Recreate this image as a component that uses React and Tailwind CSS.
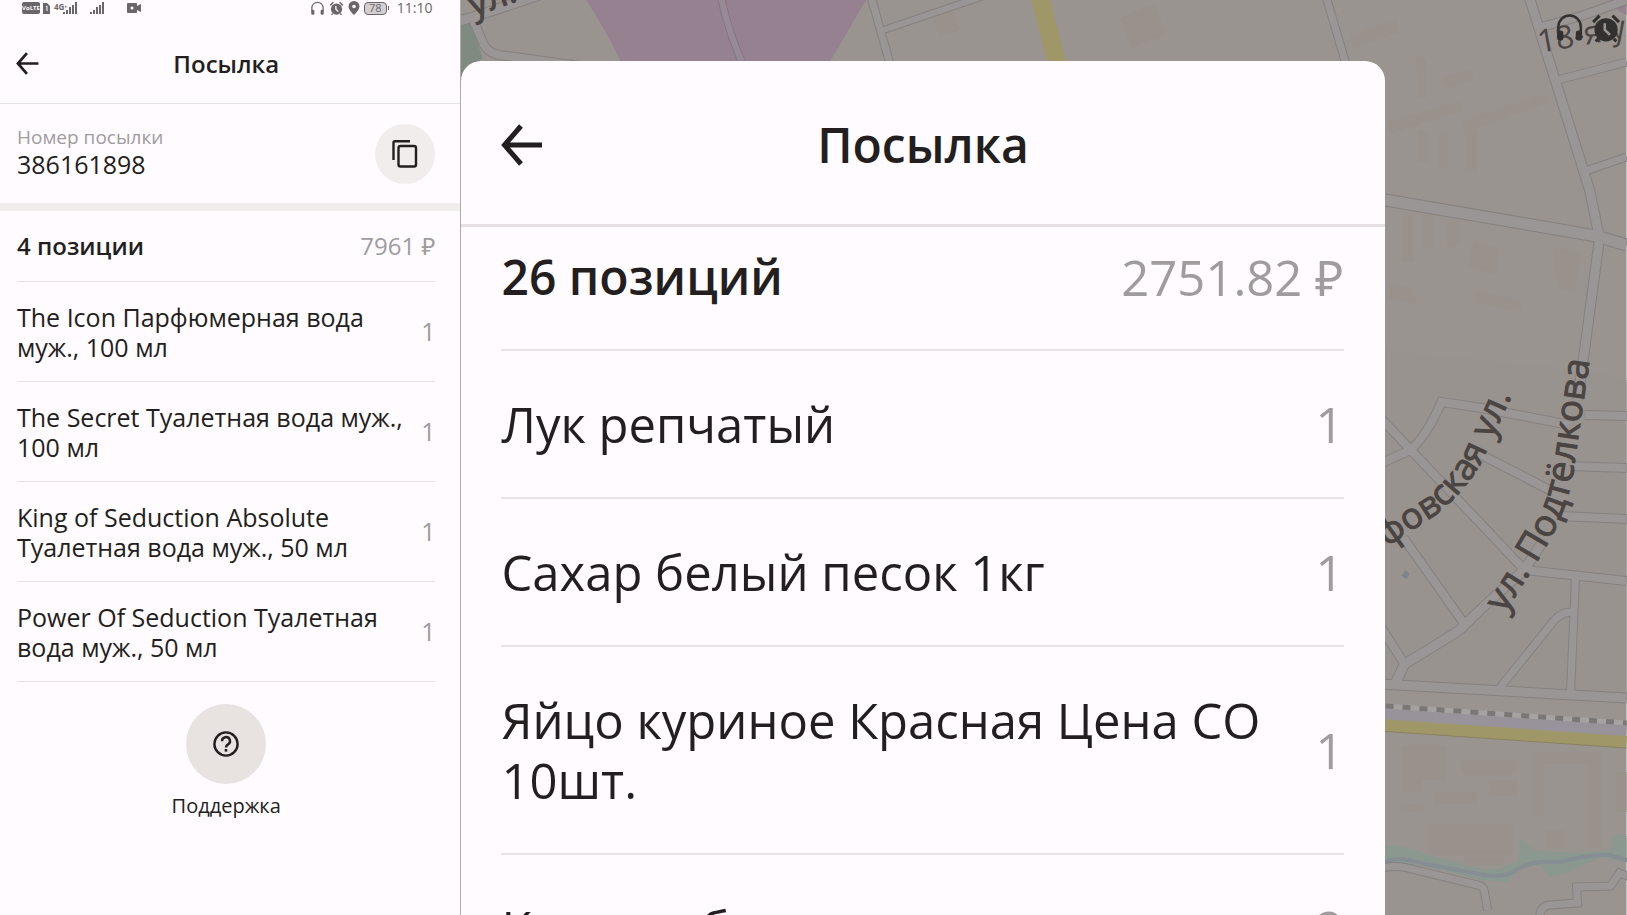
const perfumes = [
  { title: 'The Icon Парфюмерная вода муж., 100 мл', count: 1 },
  { title: 'The Secret Туалетная вода муж., 100 мл', count: 1 },
  { title: 'King of Seduction Absolute Туалетная вода муж., 50 мл', count: 1 },
  { title: 'Power Of Seduction Туалетная вода муж., 50 мл', count: 1 },
];

const groceries = [
  { title: 'Лук репчатый', count: 1 },
  { title: 'Сахар белый песок 1кг', count: 1 },
  { title: 'Яйцо куриное Красная Цена СО 10шт.', count: 1 },
  { title: 'Капуста белокочанная', count: 2 },
];

const roads = [
  { d: 'M455 22 L474 17 L540 -5', w: 9 },
  { d: 'M472 16 L484 44 Q488 53 500 55 L580 66', w: 8 },
  { d: 'M871 -5 L891 66', w: 7 },
  { d: 'M884 30 L990 -6', w: 6 },
  { d: 'M1326 -5 L1347 66', w: 7 },
  { d: 'M1529 -5 L1555 78 L1590 190 L1600 238 L1585 350 L1578 400', w: 9 },
  { d: 'M1542 27 L1585 15 L1627 0', w: 8 },
  { d: 'M1558 80 L1627 62', w: 7 },
  { d: 'M1586 171 L1627 157', w: 7 },
  { d: 'M1380 199 L1597 236 L1627 245', w: 11 },
  { d: 'M1380 464 L1411 450 Q1427 436 1442 402 L1482 408 L1570 425', w: 8 },
  { d: 'M1585 415 L1627 416', w: 8 },
  { d: 'M1380 417 L1525 570', w: 8 },
  { d: 'M1482 455 L1550 490', w: 8 },
  { d: 'M1570 466 L1627 468', w: 8 },
  { d: 'M1560 516 L1627 519', w: 8 },
  { d: 'M1404 538 L1467 627', w: 8 },
  { d: 'M1544 540 L1525 570 Q1490 600 1460 630 Q1440 643 1405 664 L1396 683', w: 9 },
  { d: 'M1525 570 L1627 581', w: 8 },
  { d: 'M1576 576 L1571 692', w: 7 },
  { d: 'M1574 612 Q1563 611 1555 620 L1500 688', w: 7 },
  { d: 'M1380 625 L1405 664', w: 8 },
  { d: 'M1380 684 L1627 698', w: 9 },
  { d: 'M1380 869 Q1395 863 1420 871 L1478 885 Q1484 886 1485 892 L1488 910', w: 7 },
  { d: 'M1540 920 Q1540 906 1550 905 L1578 903 L1577 887 L1611 886 L1620 873 L1630 877', w: 7 },
];

const buildings = [
  'M1120 18 l34 -14 l12 30 l-34 14 z',
  'M930 12 l20 -6 l10 24 l-20 6 z',
  'M1350 35 l46 -14 l4 12 l-46 14 z',
  'M1416 58 h11 v40 h-8 z',
  'M1442 78 l28 -8 l4 10 l-28 8 z',
  'M1388 122 l72 -20 l3 9 l-72 22 z',
  'M1462 122 l84 -28 l3 9 l-84 29 z',
  'M1418 130 h10 v32 h-10 z',
  'M1440 132 h8 v36 h-8 z',
  'M1466 130 h12 v42 h-12 z',
  'M1402 216 h12 v46 h-12 z',
  'M1424 214 h10 v34 h-10 z',
  'M1448 220 h12 v26 h-12 z',
  'M1474 240 l26 8 l-4 26 l-28 -8 z',
  'M1553 248 l28 6 l-6 38 l-16 -4 z',
  'M1390 284 l26 5 v14 l-26 -4 z',
  'M1476 290 l46 12 v10 l-46 -10 z',
  'M1402 746 h44 v34 h-24 v12 h-20 z',
  'M1462 760 h54 v14 h-54 z',
  'M1490 780 h28 v16 h-28 z',
  'M1434 792 h44 v12 h-44 z',
  'M1402 804 h22 v8 h-22 z',
  'M1428 824 h86 v30 h-86 z',
  'M1532 752 h70 v96 h-14 v-84 h-44 v52 h-12 z',
  'M1547 830 h18 v18 h-18 z',
  'M1617 772 h10 v40 h-10 z',
  'M1464 858 h40 v8 h-40 z',
];

function CityMap() {
  return (
    <svg
      className="absolute inset-0 w-full h-full"
      viewBox="461 0 1166 915"
      preserveAspectRatio="xMaxYMin slice"
      aria-hidden="true"
      fontFamily="'Open Sans', 'Noto Sans', sans-serif"
    >
      <defs>
        <path id="korf" d="M1330 580 Q1385 550 1402 537 L1436 515 Q1465 492 1482 462 L1512 396" />
        <path id="podt" d="M1505 614 L1536 564 Q1568 515 1574 470 L1593 340" />
      </defs>
      <rect x="455" width="1172" height="915" fill="#99948f" />
      <path d="M1384 350 L1585 370 L1627 380 V700 L1384 684 Z" fill="#99938f" />
      {buildings.map((d) => <path key={d} d={d} fill="#99918c" />)}
      <path d="M455 26 L471 22 L483 58 L461 78 L455 78 Z" fill="#7f8a80" />
      <path d="M586 -1 H867 L829 64 H622 Q612 40 586 -1 Z" fill="#958190" />
      <path d="M1609 0 H1627 V15 Q1615 10 1609 0 Z" fill="#958190" />
      <path d="M721 -5 Q728 30 744 66" fill="none" stroke="#857485" strokeWidth="8" />
      <path d="M721 -5 Q728 30 744 66" fill="none" stroke="#968b95" strokeWidth="6" />

      <path d="M1380 848 Q1400 842 1420 852 L1480 869 H1500 L1519 860 L1520 838 L1536 851 L1580 853 L1611 850 L1614 834 L1627 836 V862 L1600 858 L1570 872 L1550 877 L1540 865 L1522 868 L1508 882 L1480 880 L1420 864 L1380 868 Z" fill="#8b9890" />
      <path d="M1380 865 Q1395 854 1425 864 L1480 874 Q1505 880 1520 868 Q1535 860 1560 862 Q1590 854 1610 855 L1630 861" fill="none" stroke="#868d93" strokeWidth="4" />

      {roads.map((r) => (
        <path key={r.d} d={r.d} fill="none" stroke="#868180" strokeWidth={r.w + 2} />
      ))}
      {roads.map((r) => (
        <path key={r.d} d={r.d} fill="none" stroke="#9b9696" strokeWidth={r.w} />
      ))}

      <path d="M1380 713 L1627 730" stroke="#98939a" strokeWidth="14" />
      <path d="M1386 706 L1627 723" stroke="#a5a2a2" strokeWidth="5" />
      <path d="M1386 706 L1627 723" stroke="#7b7776" strokeWidth="5" strokeDasharray="8 9" />
      <path d="M1380 725 L1627 742" stroke="#a09768" strokeWidth="12" />
      <path d="M1380 731 L1627 748" stroke="#8a8262" strokeWidth="1" />
      <path d="M1040 -5 L1058 66" stroke="#a09768" strokeWidth="18" />
      <path d="M1402 576 l4 -6 l4 4 l-3 5 z" fill="#7f838b" />

      <g fill="#4a4442" stroke="#4a4442" strokeWidth="1" fontSize="36">
        <text transform="translate(474 17) rotate(-20)">ул.</text>
        <text textAnchor="end"><textPath href="#korf" startOffset="100%">рфовская ул.</textPath></text>
        <text fontSize="37"><textPath href="#podt">ул. Подтёлкова</textPath></text>
        <text fontSize="32" strokeWidth="0" transform="translate(1540 53) rotate(-10)">18-я ул.</text>
      </g>
      <g transform="translate(1555 13)"><Headphones size={30} className="text-[#333130]" /></g>
      <g transform="translate(1591 13)"><AlarmIcon size={31} hand="#99948f" className="text-[#333130]" /></g>
    </svg>
  );
}

function Headphones({ size, className }) {
  return (
    <svg width={size} height={size} viewBox="0 0 24 24" className={className}>
      <path d="M3 16 V11 A9 9 0 0 1 21 11 V16" fill="none" stroke="currentColor" strokeWidth="2" />
      <rect x="2" y="14" width="5" height="8" rx="2" fill="currentColor" />
      <rect x="17" y="14" width="5" height="8" rx="2" fill="currentColor" />
    </svg>
  );
}

function AlarmIcon({ size, hand, className }) {
  return (
    <svg width={size} height={size} viewBox="0 0 24 24" className={className}>
      <circle cx="12" cy="13" r="9" fill="currentColor" />
      <path d="M2 7 L7 2 M22 7 L17 2 M6 20 L4 22 M18 20 L20 22" stroke="currentColor" strokeWidth="2.4" />
      <path d="M11 8 V13 L15 17" fill="none" stroke={hand} strokeWidth="2" />
    </svg>
  );
}

function BackArrow({ size, strokeWidth }) {
  return (
    <svg width={size} height={size} viewBox="0 0 42 42" fill="none" stroke="currentColor" strokeWidth={strokeWidth}>
      <path d="M20 2 L3.5 21 L20 40 M4 21 H41" />
    </svg>
  );
}

function SignalBars() {
  return (
    <svg width="15" height="12" viewBox="0 0 15 12" fill="currentColor">
      <path d="M0 10h2v2h-2z M3 8h2v4h-2z M6 5h2v7h-2z M9 3h2v9h-2z M12 0h2v12h-2z" />
    </svg>
  );
}

function StatusBar() {
  return (
    <div className="flex items-center justify-between h-4 pl-[22px] pr-7 text-[#6b6769]">
      <div className="flex items-center">
        <svg width="28" height="12" viewBox="0 0 28 12" className="shrink-0">
          <rect width="18" height="12" rx="2" fill="currentColor" />
          <text x="9" y="8" textAnchor="middle" fontSize="6" fontWeight="700" fill="#fffbff">VoLTE</text>
          <path d="M21 1 h4 l3 3 v8 h-7 z" fill="currentColor" />
          <path d="M24 5 l1 -1 v5" stroke="#fffbff" fill="none" />
        </svg>
        <span className="ml-1 -mr-1 self-start text-[8px] leading-[10px] font-bold">4G⁺</span>
        <SignalBars />
        <span className="w-3" />
        <SignalBars />
        <svg width="14" height="10" viewBox="0 0 14 10" className="ml-[22px]">
          <path d="M1 0 h8 a1 1 0 0 1 1 1 v2 l4 -2 v8 l-4 -2 v2 a1 1 0 0 1 -1 1 h-8 a1 1 0 0 1 -1 -1 v-8 a1 1 0 0 1 1 -1 z" fill="currentColor" />
          <circle cx="5" cy="5" r="1.5" fill="#fffbff" />
        </svg>
      </div>
      <div className="flex items-center gap-1">
        <Headphones size={15} />
        <AlarmIcon size={15} hand="#fffbff" />
        <svg width="12" height="14" viewBox="0 0 12 14">
          <path d="M6 0 a5.5 5.5 0 0 1 5.5 5.5 C11.5 9 6 14 6 14 C6 14 0.5 9 0.5 5.5 A5.5 5.5 0 0 1 6 0 z" fill="currentColor" />
          <circle cx="6" cy="5.5" r="1.8" fill="#fffbff" />
        </svg>
        <div className="flex items-center mr-1">
          <span className="flex items-center justify-center w-[23px] h-[13px] rounded border border-current bg-[#d3cfd2] text-[11px] leading-3">78</span>
          <span className="w-px h-1 bg-current ml-px" />
        </div>
        <time className="text-sm leading-4">11:10</time>
      </div>
    </div>
  );
}

function ItemRow({ item }) {
  return (
    <li className="flex items-center justify-between gap-3 pt-5 pb-[19px] border-b border-[#e6e1e4]">
      <span className="text-[25px] leading-[30px]">{item.title}</span>
      <span className="text-[25px] text-[#a09b9e]">{item.count}</span>
    </li>
  );
}

function ParcelScreen() {
  return (
    <section className="w-[28.3%] shrink-0 h-screen overflow-hidden bg-[#fffbff]">
      <StatusBar />
      <header className="relative flex items-center justify-center h-[88px] pt-1 pl-[17px] pr-[25px] border-b border-[#e6e1e0]">
        <button aria-label="Назад" className="absolute left-4 top-9">
          <BackArrow size={23} strokeWidth={5} />
        </button>
        <h1 className="text-2xl font-semibold pt-1">Посылка</h1>
      </header>

      <div className="flex items-center justify-between h-[107px] pl-[17px] pr-[25px] border-b-8 border-[#f1edec]">
        <div className="pb-1">
          <p className="text-[19px] leading-6 text-[#a09b9e]">Номер посылки</p>
          <p className="text-[25px] leading-[30px]">386161898</p>
        </div>
        <button aria-label="Скопировать номер" className="flex items-center justify-center size-[60px] rounded-full bg-[#f1edec]">
          <svg width="26" height="28" viewBox="0 0 26 28" fill="none" stroke="currentColor" strokeWidth="2.4">
            <path d="M1.5 20 V2.5 Q1.5 1.2 2.8 1.2 H18" />
            <rect x="6.5" y="6" width="17.5" height="20.5" rx="2" />
          </svg>
        </button>
      </div>

      <div className="pl-[17px] pr-[25px]">
        <div className="flex items-center justify-between h-[71px] border-b border-[#e6e1e4]">
          <h2 className="text-2xl font-semibold">4 позиции</h2>
          <span className="text-2xl text-[#a09b9e]">7961 ₽</span>
        </div>
        <ul>
          {perfumes.map((item) => <ItemRow key={item.title} item={item} />)}
        </ul>
        <button className="flex flex-col items-center mx-auto mt-[22px]">
          <span className="flex items-center justify-center size-20 rounded-full bg-[#e8e2e0]">
            <svg width="26" height="26" viewBox="0 0 26 26" fill="none" stroke="currentColor">
              <circle cx="13" cy="13" r="11.6" strokeWidth="2.4" />
              <path d="M9 10.2 A4 3.9 0 1 1 15 13.4 Q13 14.5 13 16.6" strokeWidth="2.4" />
              <path d="M13 18 V20.6" strokeWidth="2.6" />
            </svg>
          </span>
          <span className="mt-2 text-xl leading-7">Поддержка</span>
        </button>
      </div>
    </section>
  );
}

function ParcelSheet() {
  return (
    <section className="relative w-[79.2%] h-full overflow-hidden rounded-t-[20px] bg-[#fffbff]">
      <header className="relative flex items-center justify-center h-[166px] pt-1 border-b-[3px] border-[#e6e0e2]">
        <button aria-label="Назад" className="absolute left-10">
          <BackArrow size={42} strokeWidth={5} />
        </button>
        <h1 className="text-5xl font-semibold">Посылка</h1>
      </header>
      <div className="pl-10 pr-[41px]">
        <div className="flex items-center justify-between pt-5 pb-[42px] border-b-2 border-[#e8e3e6]">
          <h2 className="text-5xl leading-[60px] font-semibold">26 позиций</h2>
          <span className="text-[49px] leading-[60px] text-[#a09b9c]">2751.82 ₽</span>
        </div>
        <ul>
          {groceries.map((item) => (
            <li key={item.title} className="flex items-center justify-between gap-8 py-[43px] border-b-2 border-[#e8e3e6]">
              <span className="text-[49px] leading-[60px]">{item.title}</span>
              <span className="text-[49px] leading-[60px] text-[#a09b9c]">{item.count}</span>
            </li>
          ))}
        </ul>
      </div>
    </section>
  );
}

export default function App() {
  return (
    <main className="flex h-screen overflow-hidden font-['Open_Sans','Noto_Sans',sans-serif] text-[#231f20]">
      <ParcelScreen />
      <div className="relative flex-1 h-screen overflow-hidden pt-[61px] border-l border-[#aeaaa6]">
        <CityMap />
        <ParcelSheet />
      </div>
    </main>
  );
}
